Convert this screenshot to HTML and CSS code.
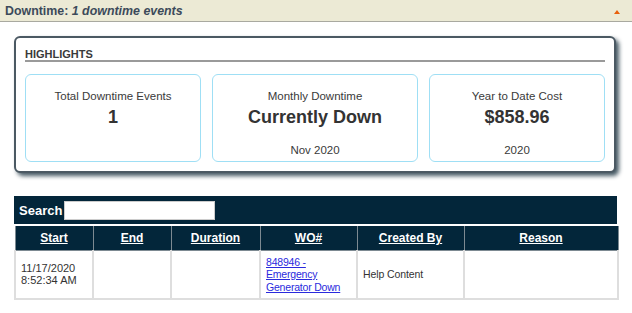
FILE: index.html
```html
<!DOCTYPE html>
<html>
<head>
<meta charset="utf-8">
<link rel="stylesheet" href="styles.css">
</head>
<body>
<div class="topbar">
  <span class="title"><b>Downtime:</b> <i>1 downtime events</i></span>
  <span class="caret"></span>
</div>
<div class="panel">
  <div class="panel-title">HIGHLIGHTS</div>
  <div class="cards">
    <div class="card">
      <div class="label">Total Downtime Events</div>
      <div class="value">1</div>
      <div class="sub"></div>
    </div>
    <div class="card">
      <div class="label">Monthly Downtime</div>
      <div class="value">Currently Down</div>
      <div class="sub">Nov 2020</div>
    </div>
    <div class="card">
      <div class="label">Year to Date Cost</div>
      <div class="value">$858.96</div>
      <div class="sub">2020</div>
    </div>
  </div>
</div>
<div class="grid">
  <div class="search"><span class="search-label">Search</span><input class="search-input" type="text"></div>
  <table class="events">
    <colgroup>
      <col class="c1"><col class="c2"><col class="c3"><col class="c4"><col class="c5"><col class="c6">
    </colgroup>
    <thead>
      <tr><th><a>Start</a></th><th><a>End</a></th><th><a>Duration</a></th><th><a>WO#</a></th><th><a>Created By</a></th><th><a>Reason</a></th></tr>
    </thead>
    <tbody>
      <tr>
        <td>11/17/2020<br>8:52:34 AM</td>
        <td></td>
        <td></td>
        <td><a class="link" href="#">848946 - Emergency Generator Down</a></td>
        <td class="narrow">Help Content</td>
        <td></td>
      </tr>
    </tbody>
  </table>
</div>
</body>
</html>
```

FILE: styles.css
```css
html, body { margin: 0; padding: 0; background: #fff; }
body { font-family: "Liberation Sans", Arial, sans-serif; color: #333; width: 632px; }

.topbar {
  height: 21px;
  background: #ecead5;
  border-bottom: 1px solid #a9a9a0;
  display: flex;
  align-items: center;
  justify-content: space-between;
  padding: 0 12px 0 5px;
  box-sizing: content-box;
}
.title { font-size: 12.4px; color: #3c4a5a; font-weight: bold; }
.title i { font-weight: bold; }
.caret {
  width: 0; height: 0;
  border-left: 3px solid transparent;
  border-right: 3px solid transparent;
  border-bottom: 4px solid #e8600c;
  margin-top: 2px;
}

.panel {
  margin: 14px 0 0 14px;
  width: 602px;
  box-sizing: border-box;
  border: 2px solid #4b5963;
  border-radius: 6px;
  box-shadow: 3px 3px 4px rgba(10, 35, 50, 0.75);
  padding: 10px 9px 9px 9px;
  background: #fff;
}
.panel-title {
  font-size: 11px;
  font-weight: bold;
  color: #3a3a3a;
  padding-bottom: 0;
  border-bottom: 2px solid #9a9a9a;
  line-height: 12px;
}
.cards {
  display: grid;
  grid-template-columns: 176px 206px 176px;
  justify-content: space-between;
  margin-top: 12px;
}
.card {
  height: 88px;
  box-sizing: border-box;
  border: 1.5px solid #9fdff5;
  border-radius: 6px;
  text-align: center;
  display: flex;
  flex-direction: column;
  padding-top: 15px;
}
.label { font-size: 11.5px; color: #3a3a3a; line-height: 13px; }
.value { font-size: 18px; font-weight: bold; color: #333; line-height: 20px; margin-top: 4px; }
.sub { font-size: 11.5px; color: #3a3a3a; line-height: 13px; margin-top: auto; margin-bottom: 4px; }

.grid { margin: 23px 0 0 14px; width: 603px; }
.search {
  height: 28px;
  background: #03263a;
  display: flex;
  align-items: center;
  padding-left: 5px;
}
.search-label { color: #fff; font-weight: bold; font-size: 13px; margin-right: 2px; }
.search-input {
  width: 151px; height: 19px; box-sizing: border-box;
  border: 1px solid #ccc; margin: 0; padding: 0; background: #fff;
}

.events {
  width: 603px;
  border-collapse: collapse;
  table-layout: fixed;
  margin-top: 2px;
  font-size: 11px;
}
.c1 { width: 78px; } .c2 { width: 78px; } .c3 { width: 89px; }
.c4 { width: 97px; } .c5 { width: 107px; } .c6 { width: 154px; }
.events th {
  background: #03263a;
  height: 24px;
  padding: 0;
  border: 1px solid #7d8a92;
  border-top: 0;
  color: #fff;
  font-size: 12px;
  font-weight: bold;
}
.events th a { color: #fff; text-decoration: underline; }
.events td {
  height: 48px;
  box-sizing: border-box;
  border: 2px solid #dedede;
  border-top: 0;
  padding: 2px 5px 2px 5px;
  vertical-align: middle;
  color: #333;
  line-height: 12.5px;
}
.link { color: #2a2add; font-size: 10.5px; letter-spacing: -0.2px; }
.narrow { font-size: 10.5px; letter-spacing: -0.1px; }
```
